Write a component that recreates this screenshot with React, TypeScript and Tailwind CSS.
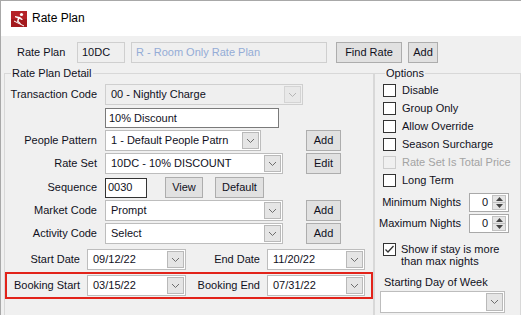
import React from 'react';

const Chevron = ({ color = '#606060' }: { color?: string }) => (
  <svg width="9" height="6" viewBox="0 0 9 6">
    <polyline points="1,1 4.5,4.5 8,1" fill="none" stroke={color} strokeWidth="1" />
  </svg>
);

const DropButton = ({ disabled = false }: { disabled?: boolean }) => (
  <div
    className={`h-full w-[17px] flex items-center justify-center border ${
      disabled ? 'border-[#d4d4d4] bg-[#e8e8e8]' : 'border-[#b9b9b9] bg-[#e5e5e5]'
    }`}
  >
    <Chevron color={disabled ? '#b5b5b5' : '#6d6d6d'} />
  </div>
);

const Combo = ({ text, w, disabled = false }: { text: string; w: string; disabled?: boolean }) => (
  <div
    className={`${w} h-[21px] flex items-center border p-[1px] ${
      disabled ? 'border-[#cfcfcf] bg-[#efefef]' : 'border-[#bdbdbd] bg-white'
    }`}
  >
    <span className="flex-1 pl-[4px] truncate">{text}</span>
    <DropButton disabled={disabled} />
  </div>
);

const Btn = ({ text, w }: { text: string; w: string }) => (
  <div className={`${w} h-[21px] flex items-center justify-center border border-[#adadad] bg-[#e1e1e1]`}>
    {text}
  </div>
);

const CheckBox = ({ label, disabled = false }: { label: string; disabled?: boolean }) => (
  <div className="flex items-center h-[18px]">
    <div
      className={`w-[13px] h-[13px] border ${
        disabled ? 'border-[#cccccc] bg-[#f0f0f0]' : 'border-[#333333] bg-white'
      }`}
    />
    <span className={`ml-[6px] ${disabled ? 'text-[#a3a3a3]' : ''}`}>{label}</span>
  </div>
);

const Spinner = () => (
  <div className="w-[40px] h-[19px] flex items-center border border-[#a9a9a9] bg-white pr-[2px]">
    <span className="flex-1 text-right pr-[4px]">0</span>
    <div className="w-[14px] h-[15px] flex flex-col border border-[#c2c2c2] bg-[#e5e5e5]">
      <div className="flex-1 flex items-center justify-center border-b border-[#c2c2c2]">
        <svg width="7" height="4" viewBox="0 0 7 4"><polygon points="0,4 3.5,0 7,4" fill="#444" /></svg>
      </div>
      <div className="flex-1 flex items-center justify-center">
        <svg width="7" height="4" viewBox="0 0 7 4"><polygon points="0,0 3.5,4 7,0" fill="#444" /></svg>
      </div>
    </div>
  </div>
);

const DateBox = ({ text, w }: { text: string; w: string }) => (
  <div className={`${w} h-[21px] flex items-center border border-[#bdbdbd] bg-white p-[1px]`}>
    <span className="flex-1 pl-[4px]">{text}</span>
    <DropButton />
  </div>
);

const AppIcon = () => (
  <svg width="16" height="16" viewBox="0 0 16 16">
    <rect width="16" height="16" fill="#a3191d" />
    <rect x="0" y="0" width="16" height="8" fill="#b52227" />
    <circle cx="10.5" cy="3.5" r="1.6" fill="#fff" />
    <path d="M4 5 L9 6 L12 8.5 L10.5 9 L8.5 7.8 L7.5 10 L10 12.5 L9 13 L6 10.5 L6.8 7.2 L4 6.3 Z" fill="#fff" />
    <path d="M3 10 L13 15" stroke="#fff" strokeWidth="1" />
  </svg>
);

export default function App() {
  return (
    <div className="w-[521px] h-[315px] overflow-hidden bg-[#f0f0f0] border-l border-t border-[#a8a8a8] font-['Liberation_Sans',Arial,sans-serif] text-[11px] leading-[13px] text-[#10101c]">
      {/* title bar */}
      <div className="h-[35px] bg-white flex items-center pl-[10px]">
        <AppIcon />
        <span className="ml-[5px] text-[12px] text-black">Rate Plan</span>
      </div>

      {/* rate plan row */}
      <div className="h-[31px] flex items-start pt-[6px] pl-[16px]">
        <span className="w-[60px] h-[21px] flex items-center">Rate Plan</span>
        <div className="w-[48px] h-[21px] flex items-center border border-[#cfcfcf] bg-[#efefef] pl-[4px]">10DC</div>
        <div className="ml-[6px] w-[196px] h-[21px] flex items-center border border-[#cfcfcf] bg-[#efefef] pl-[4px] text-[#94acd6]">
          R - Room Only Rate Plan
        </div>
        <div className="ml-[9px]"><Btn text="Find Rate" w="w-[66px]" /></div>
        <div className="ml-[6px]"><Btn text="Add" w="w-[30px]" /></div>
      </div>

      <div className="flex items-start">
        {/* Rate Plan Detail */}
        <fieldset className="ml-[3px] w-[368px] h-[260px] border border-[#d8d8d8]">
          <legend className="ml-[6px] px-[1px]">Rate Plan Detail</legend>

          <div className="flex items-center h-[21px] mt-[4px]">
            <span className="w-[92px] text-right">Transaction Code</span>
            <div className="ml-[8px]"><Combo text="00 - Nightly Charge" w="w-[198px]" disabled /></div>
          </div>

          <div className="flex items-center h-[20px] mt-[3px]">
            <div className="ml-[100px] w-[174px] h-[20px] flex items-center border border-[#7a7a7a] bg-white pl-[3px]">10% Discount</div>
          </div>

          <div className="flex items-center h-[21px] mt-[2px]">
            <span className="w-[92px] text-right">People Pattern</span>
            <div className="ml-[8px]"><Combo text="1 - Default People Patrn" w="w-[156px]" /></div>
            <div className="ml-[45px]"><Btn text="Add" w="w-[35px]" /></div>
          </div>

          <div className="flex items-center h-[21px] mt-[2px]">
            <span className="w-[92px] text-right">Rate Set</span>
            <div className="ml-[8px]"><Combo text="10DC - 10% DISCOUNT" w="w-[178px]" /></div>
            <div className="ml-[23px]"><Btn text="Edit" w="w-[35px]" /></div>
          </div>

          <div className="flex items-center h-[21px] mt-[3px]">
            <span className="w-[92px] text-right">Sequence</span>
            <div className="ml-[8px] w-[42px] h-[20px] flex items-center border border-[#333333] bg-white pl-[2px]">0030</div>
            <div className="ml-[18px]"><Btn text="View" w="w-[38px]" /></div>
            <div className="ml-[12px]"><Btn text="Default" w="w-[49px]" /></div>
          </div>

          <div className="flex items-center h-[21px] mt-[2px]">
            <span className="w-[92px] text-right">Market Code</span>
            <div className="ml-[8px]"><Combo text="Prompt" w="w-[178px]" /></div>
            <div className="ml-[23px]"><Btn text="Add" w="w-[35px]" /></div>
          </div>

          <div className="flex items-center h-[21px] mt-[2px]">
            <span className="w-[92px] text-right">Activity Code</span>
            <div className="ml-[8px]"><Combo text="Select" w="w-[178px]" /></div>
            <div className="ml-[23px]"><Btn text="Add" w="w-[35px]" /></div>
          </div>

          <div className="flex items-center h-[21px] mt-[5px]">
            <span className="w-[75px] text-right">Start Date</span>
            <div className="ml-[7px]"><DateBox text="09/12/22" w="w-[99px]" /></div>
            <span className="w-[74px] text-right">End Date</span>
            <div className="ml-[7px]"><DateBox text="11/20/22" w="w-[98px]" /></div>
          </div>

          <div className="mt-[2px] w-[368px] h-[27px] flex items-center border-2 border-[#e2231a]">
            <span className="w-[73px] text-right">Booking Start</span>
            <div className="ml-[7px]"><DateBox text="03/15/22" w="w-[99px]" /></div>
            <span className="w-[74px] text-right">Booking End</span>
            <div className="ml-[7px]"><DateBox text="07/31/22" w="w-[98px]" /></div>
          </div>
        </fieldset>

        {/* Options */}
        <fieldset className="w-[160px] h-[260px] border border-[#d8d8d8] pl-[8px]">
          <legend className="ml-[2px] px-[1px]">Options</legend>
          <div className="mt-[1px]">
            <CheckBox label="Disable" />
            <CheckBox label="Group Only" />
            <CheckBox label="Allow Override" />
            <CheckBox label="Season Surcharge" />
            <CheckBox label="Rate Set Is Total Price" disabled />
            <CheckBox label="Long Term" />
          </div>

          <div className="flex items-center h-[19px] mt-[4px] -ml-[8px]">
            <span className="w-[86px] text-right">Minimum Nights</span>
            <div className="ml-[8px]"><Spinner /></div>
          </div>
          <div className="flex items-center h-[19px] mt-[2px] -ml-[8px]">
            <span className="w-[86px] text-right">Maximum Nights</span>
            <div className="ml-[8px]"><Spinner /></div>
          </div>

          <div className="flex items-start mt-[10px]">
            <div className="w-[13px] h-[13px] border border-[#333333] bg-white flex items-center justify-center">
              <svg width="11" height="11" viewBox="0 0 11 11">
                <polyline points="1.5,5.5 4,8 9.5,2" fill="none" stroke="#333" strokeWidth="1.3" />
              </svg>
            </div>
            <div className="ml-[5px] leading-[12px]">
              Show if stay is more
              <br />
              than max nights
            </div>
          </div>

          <div className="mt-[9px] ml-[1px]">Starting Day of Week</div>
          <div className="mt-[2px] -ml-[3px] w-[125px] h-[22px] flex items-center border border-[#bdbdbd] bg-white p-[1px]">
            <span className="flex-1" />
            <DropButton />
          </div>
        </fieldset>
      </div>
    </div>
  );
}
